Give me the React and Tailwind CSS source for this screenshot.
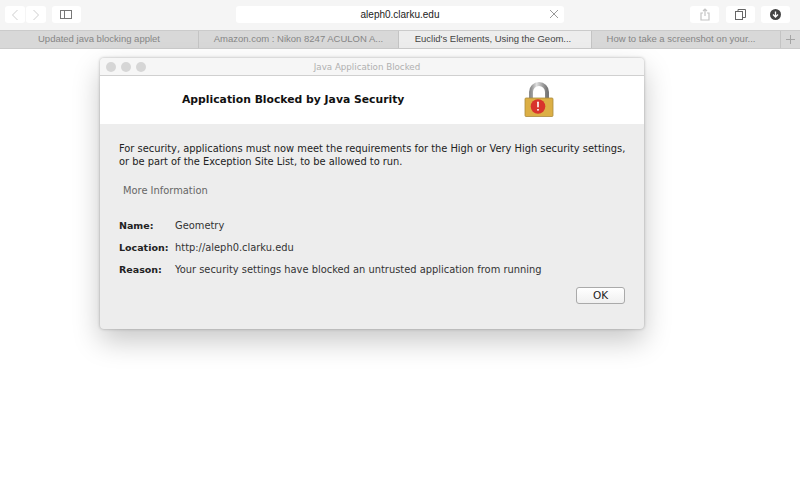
import React from "react";

const ui = { fontFamily: '"Liberation Sans", Arial, sans-serif' };
const dlg = { fontFamily: '"DejaVu Sans", Verdana, sans-serif' };

function Tool({ className, children }) {
  return <div className={"h-[17px] rounded-[3px] bg-white flex items-center justify-center " + className}>{children}</div>;
}

function Tab({ className, text }) {
  return (
    <div className={"h-full flex items-center justify-center text-[9.5px] whitespace-nowrap " + className}>{text}</div>
  );
}

function Row({ label, value }) {
  return (
    <div className="flex h-[22px] items-center text-[9.9px]">
      <div className="w-[56px] text-[9.5px] font-bold text-[#222]">{label}</div>
      <div className="text-[#333]">{value}</div>
    </div>
  );
}

function Lock() {
  return (
    <svg width="30" height="38" viewBox="0 0 30 38">
      <defs>
        <linearGradient id="sh" x1="0" x2="1" y1="0" y2="0">
          <stop offset="0" stopColor="#8d8d8d" />
          <stop offset="0.35" stopColor="#e0e0e0" />
          <stop offset="0.7" stopColor="#a5a5a5" />
          <stop offset="1" stopColor="#777" />
        </linearGradient>
      </defs>
      <path d="M7 18V11a8 8 0 0 1 16 0v7" fill="none" stroke="url(#sh)" strokeWidth="4" />
      <rect x="1" y="17" width="28" height="18.5" rx="1" fill="#dcaf45" stroke="#a98a3c" strokeWidth="0.8" />
      <circle cx="14" cy="25.5" r="7.3" fill="#d8342c" />
      <rect x="13.2" y="20.5" width="1.6" height="6" rx="0.8" fill="#fff" />
      <rect x="13.2" y="28" width="1.6" height="1.6" fill="#fff" />
    </svg>
  );
}

export default function App() {
  return (
    <div className="w-[800px] h-[500px] overflow-hidden bg-white flex flex-col" style={ui}>
      <div className="h-[30px] bg-[#f5f5f5] flex items-start pt-[6px] pl-[5px] pr-[10px] shrink-0">
        <Tool className="w-[20px]">
          <svg width="8" height="12" viewBox="0 0 8 12"><path d="M6.5 1L1.5 6l5 5" fill="none" stroke="#cfcfcf" strokeWidth="1" /></svg>
        </Tool>
        <Tool className="w-[20px] ml-[1px]">
          <svg width="8" height="12" viewBox="0 0 8 12"><path d="M1.5 1l5 5-5 5" fill="none" stroke="#cfcfcf" strokeWidth="1" /></svg>
        </Tool>
        <Tool className="w-[29px] ml-[6px]">
          <svg width="12" height="9" viewBox="0 0 12 9"><rect x="0.5" y="0.5" width="11" height="8" fill="none" stroke="#777" /><path d="M4.5 0.5v8" stroke="#777" /></svg>
        </Tool>
        <Tool className="w-[329px] ml-[155px] relative text-[10px] text-[#222]">
          aleph0.clarku.edu
          <svg className="absolute right-[5px] top-[3px]" width="10" height="10" viewBox="0 0 10 10"><path d="M1 1l8 8M9 1l-8 8" stroke="#999" strokeWidth="1" /></svg>
        </Tool>
        <Tool className="w-[29px] ml-[126px]">
          <svg width="10" height="13" viewBox="0 0 10 13"><path d="M3 5H1v7h8V5H7M5 8V1M3 3l2-2 2 2" fill="none" stroke="#c4c4c4" strokeWidth="1.2" /></svg>
        </Tool>
        <Tool className="w-[29px] ml-[7px]">
          <svg width="11" height="11" viewBox="0 0 11 11"><rect x="0.5" y="2.5" width="7" height="8" fill="#fff" stroke="#666" /><path d="M3 2.5v-2h7.5v8h-3" fill="none" stroke="#666" /></svg>
        </Tool>
        <Tool className="w-[29px] ml-[6px]">
          <svg width="11" height="11" viewBox="0 0 11 11"><circle cx="5.5" cy="5.5" r="5.5" fill="#444" /><path d="M5.5 2.5v5M3 5.5l2.5 2.5L8 5.5" fill="none" stroke="#fff" strokeWidth="1.3" /></svg>
        </Tool>
      </div>
      <div className="h-[19px] shrink-0 flex bg-[#d8d8d8] border-t border-b border-[#cbcbcb] text-[#868686]">
        <Tab className="w-[199px] border-r border-[#c4c4c4]" text="Updated java blocking applet" />
        <Tab className="w-[200px] border-r border-[#c4c4c4]" text="Amazon.com : Nikon 8247 ACULON A..." />
        <Tab className="w-[192px] bg-[#ededed] text-[#444] pr-[4px]" text="Euclid's Elements, Using the Geom..." />
        <Tab className="w-[190px] border-l border-r border-[#c4c4c4] pr-[10px]" text="How to take a screenshot on your..." />
        <div className="flex-1 flex items-center justify-center">
          <svg width="9" height="9" viewBox="0 0 9 9"><path d="M4.5 0v9M0 4.5h9" stroke="#a5a5a5" /></svg>
        </div>
      </div>
      <div className="flex-1 pt-[9px] pl-[100px]">
        <div className="w-[544px] h-[271px] rounded-[4px] bg-[#ededed] overflow-hidden flex flex-col shadow-[0_12px_28px_rgba(0,0,0,0.22),0_0_3px_rgba(0,0,0,0.3)]">
          <div className="h-[18px] shrink-0 bg-[#f6f6f6] border-b border-[#d0d0d0] flex items-center px-[6px]">
            <div className="flex gap-[5px]">
              <div className="w-[10px] h-[10px] rounded-full bg-[#d6d6d6]" />
              <div className="w-[10px] h-[10px] rounded-full bg-[#d6d6d6]" />
              <div className="w-[10px] h-[10px] rounded-full bg-[#d6d6d6]" />
            </div>
            <div className="flex-1 text-center text-[8.7px] text-[#b0b0b0] pr-[50px] pt-[2px]" style={dlg}>Java Application Blocked</div>
          </div>
          <div className="h-[48px] shrink-0 bg-white flex items-center pl-[82px]" style={dlg}>
            <div className="w-[342px] text-[10.8px] font-bold text-[#111]">Application Blocked by Java Security</div>
            <Lock />
          </div>
          <div className="flex-1 flex flex-col pl-[19px] pr-[18px] pt-[18px]" style={dlg}>
            <p className="text-[9.87px] leading-[13px] text-[#222] whitespace-nowrap">
              For security, applications must now meet the requirements for the High or Very High security settings,
              <br />
              or be part of the Exception Site List, to be allowed to run.
            </p>
            <div className="mt-[16px] ml-[4px] text-[9.9px] leading-[13px] text-[#666]">More Information</div>
            <div className="mt-[18px] flex flex-col">
              <Row label="Name:" value="Geometry" />
              <Row label="Location:" value="http://aleph0.clarku.edu" />
              <Row label="Reason:" value="Your security settings have blocked an untrusted application from running" />
            </div>
            <div className="flex justify-end mt-[6px] pr-[1px]">
              <button className="w-[49px] h-[17px] rounded-[3px] bg-gradient-to-b from-white to-[#f0f0f0] border border-[#aaa] text-[10.5px] text-[#222] flex items-center justify-center">
                OK
              </button>
            </div>
          </div>
        </div>
      </div>
    </div>
  );
}
